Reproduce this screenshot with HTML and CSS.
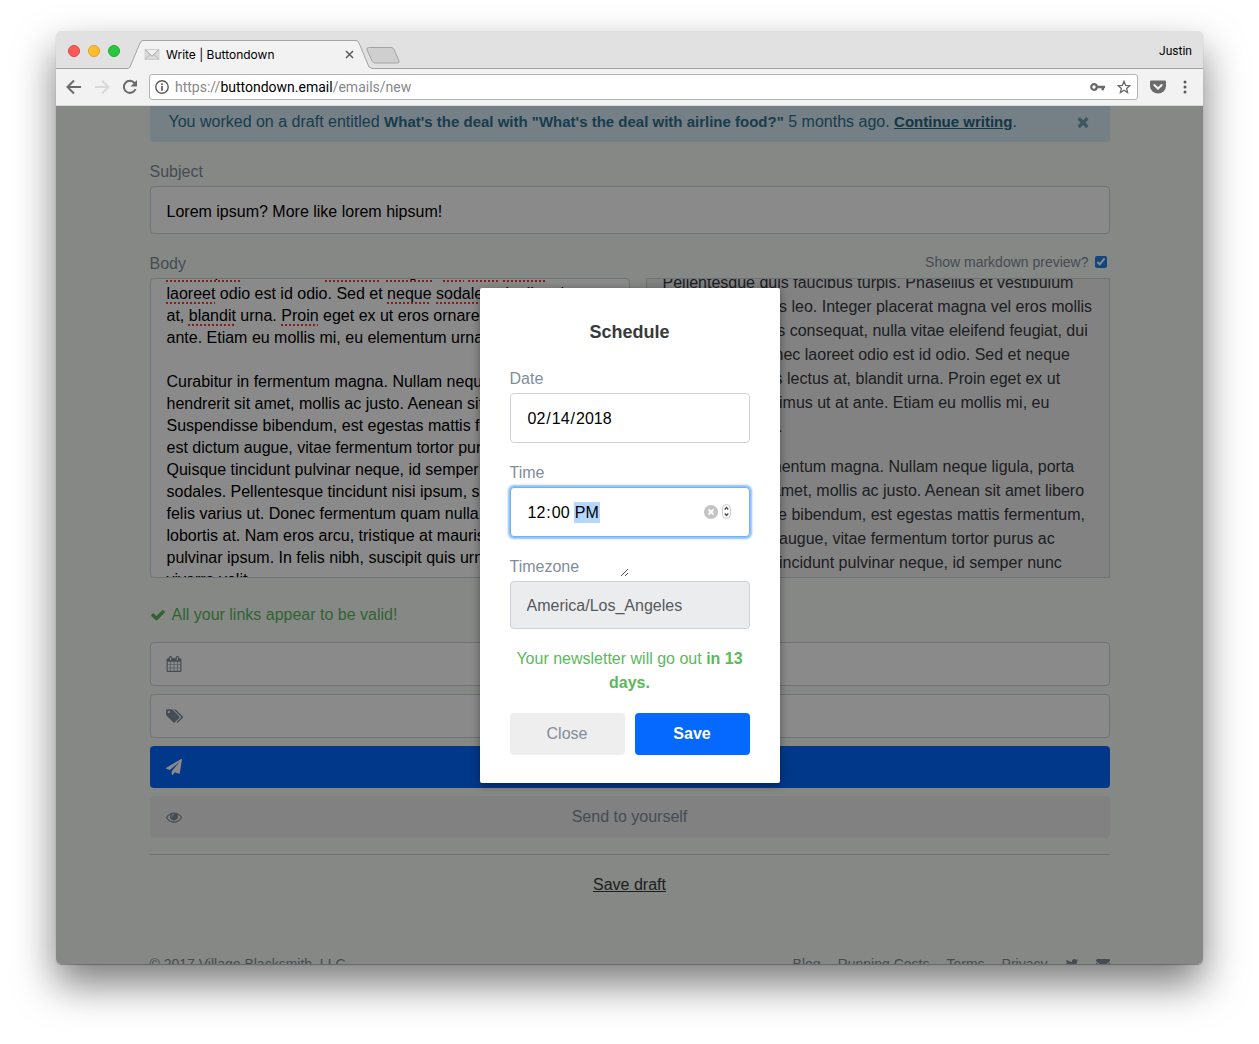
FILE: index.html
```
<!doctype html>
<html lang="en">
<head>
	<meta charset="utf-8">
	<meta name="viewport" content="width=device-width, initial-scale=1">
	<title>Write | Buttondown</title>
	<link rel="stylesheet" href="styles.css">
</head>
<body>

<div class="window">

	<header class="titlebar">
		<div class="lights">
			<span class="light red"></span>
			<span class="light yellow"></span>
			<span class="light green"></span>
		</div>
		<div class="tab">
			<svg class="tab-shape" viewBox="0 0 244 29" preserveAspectRatio="none" aria-hidden="true">
				<path d="M0 28.5 L2 27 L12 3 Q13 .5 15 .5 H228 Q230 .5 231 3 L241 27 L244 28.5 V29 H0z" fill="#f2f2f2"/>
				<path d="M0 28.5 L2 27 L12 3 Q13 .5 15 .5 H228 Q230 .5 231 3 L241 27 L244 28.5" fill="none" stroke="#a3a3a3"/>
			</svg>
			<svg class="favicon" viewBox="0 0 16 12" aria-hidden="true">
				<rect x=".5" y=".5" width="15" height="11" fill="#dcdcdc" stroke="#cacaca"/>
				<path d="M1 11 L6 5.500 M15 11 L10 5.500" stroke="#b0b0b0" fill="none"/>
				<path d="M1 1 L8 8 L15 1" stroke="#9a9a9a" fill="#f0f0f0"/>
			</svg>
			<span class="tab-title">Write | Buttondown</span>
			<button class="plain" type="button" aria-label="Close tab">
				<svg width="9" height="9" viewBox="0 0 9 9"><path d="M1 1l7 7M8 1L1 8" stroke="#5a5a5a" stroke-width="1.500"/></svg>
			</button>
		</div>
		<button class="plain new-tab" type="button" aria-label="New tab">
			<svg width="34" height="17" viewBox="0 0 34 17"><path d="M2.500 .5 H25 Q27 .5 28 2.500 L33 14 Q33.500 16 31.500 16 H9 Q7 16 6 14 L1 3 Q.5 .5 2.500 .5z" fill="#cfcfcf" stroke="#a3a3a3"/></svg>
		</button>
		<span class="profile">Justin</span>
	</header>

	<nav class="toolbar">
		<button class="plain" type="button" aria-label="Back">
			<svg width="16" height="16" viewBox="0 0 16 16"><path d="M15 8H2M8 1.500L1.500 8 8 14.500" fill="none" stroke="#6a6a6a" stroke-width="2"/></svg>
		</button>
		<button class="plain" type="button" aria-label="Forward">
			<svg width="16" height="16" viewBox="0 0 16 16"><path d="M1 8h13M8 1.500L14.500 8 8 14.500" fill="none" stroke="#d8d8d8" stroke-width="2"/></svg>
		</button>
		<button class="plain" type="button" aria-label="Reload">
			<svg width="16" height="16" viewBox="0 0 16 16"><path d="M13.500 10 A6 6 0 1 1 12.500 4" fill="none" stroke="#6a6a6a" stroke-width="2"/><path d="M15 1v6.500H8.500z" fill="#6a6a6a"/></svg>
		</button>
		<div class="address">
			<svg width="14" height="14" viewBox="0 0 14 14" aria-hidden="true"><circle cx="7" cy="7" r="6.200" fill="none" stroke="#5a5a5a" stroke-width="1.400"/><path d="M7 3.200v1.700M7 6v4.800" stroke="#5a5a5a" stroke-width="1.700"/></svg>
			<span class="url">https://<b>buttondown.email</b>/emails/new</span>
			<svg width="15" height="8" viewBox="0 0 15 8" aria-hidden="true"><circle cx="4" cy="4" r="2.800" fill="none" stroke="#6a6a6a" stroke-width="2.200"/><path d="M7 2.800h8v2.400h-1v2h-2.500v-2H7z" fill="#6a6a6a"/></svg>
			<svg width="14" height="14" viewBox="0 0 14 14" aria-hidden="true"><path d="M7 1.300l1.600 4 4.200.300-3.200 2.800 1 4.200L7 10.300l-3.600 2.300 1-4.200L1.200 5.600l4.200-.3z" fill="none" stroke="#6a6a6a" stroke-width="1.300"/></svg>
		</div>
		<svg width="16" height="14" viewBox="0 0 16 14" aria-hidden="true"><path d="M0 1.500Q0 .5 1 .5h14q1 0 1 1V6a8 7.500 0 0 1-16 0z" fill="#6a6a6a"/><path d="M4.300 5L8 8.500l3.700-3.500" fill="none" stroke="#f2f2f2" stroke-width="2" stroke-linecap="round"/></svg>
		<button class="plain menu" type="button" aria-label="Menu">
			<svg width="4" height="14" viewBox="0 0 4 14"><circle cx="2" cy="2" r="1.500" fill="#5a5a5a"/><circle cx="2" cy="7" r="1.500" fill="#5a5a5a"/><circle cx="2" cy="12" r="1.500" fill="#5a5a5a"/></svg>
		</button>
	</nav>

	<div class="viewport">
		<main class="container">

			<div class="alert">
				<span>You worked on a draft entitled <b>What's the deal with "What's the deal with airline food?"</b> 5 months ago. <a href="#">Continue writing</a>.</span>
				<button class="plain dismiss" type="button" aria-label="Dismiss">
					<svg width="16" height="16" viewBox="0 0 1792 1792"><path fill="currentColor" d="M1490 1322q0 40-28 68l-136 136q-28 28-68 28t-68-28l-294-294-294 294q-28 28-68 28t-68-28l-136-136q-28-28-28-68t28-68l294-294-294-294q-28-28-28-68t28-68l136-136q28-28 68-28t68 28l294 294 294-294q28-28 68-28t68 28l136 136q28 28 28 68t-28 68l-294 294 294 294q28 28 28 68z"/></svg>
				</button>
			</div>

			<div class="field">
				<label for="subject">Subject</label>
				<input class="control" id="subject" type="text" value="Lorem ipsum? More like lorem hipsum!">
			</div>

			<div class="field-head">
				<label for="body">Body</label>
				<label class="toggle">Show markdown preview? <input type="checkbox" checked></label>
			</div>
			<div class="panes">
				<div class="editor">
					<textarea id="body" wrap="off" spellcheck="false">consequat, nulla vitae eleifend feugiat, dui nibh mattis est, nec
laoreet odio est id odio. Sed et neque sodales, dapibus lectus
at, blandit urna. Proin eget ex ut eros ornare maximus ut at
ante. Etiam eu mollis mi, eu elementum urna.

Curabitur in fermentum magna. Nullam neque ligula, porta ac
hendrerit sit amet, mollis ac justo. Aenean sit amet libero nisi.
Suspendisse bibendum, est egestas mattis fermentum, nunc
est dictum augue, vitae fermentum tortor purus ac libero.
Quisque tincidunt pulvinar neque, id semper nunc
sodales. Pellentesque tincidunt nisi ipsum, sed rhoncus
felis varius ut. Donec fermentum quam nulla, a aliquet
lobortis at. Nam eros arcu, tristique at mauris non,
pulvinar ipsum. In felis nibh, suscipit quis urna quis,
viverra velit.</textarea>
					<!-- spelling marks, scrolled together with the textarea -->
					<div class="marks" id="marks" aria-hidden="true"><u>consequat</u>, nulla vitae <u>eleifend</u> <u>feugiat</u>, <u>dui</u> <u>nibh</u> <u>mattis</u> est, nec
<u>laoreet</u> odio est id odio. Sed et <u>neque</u> <u>sodales</u>, dapibus lectus
at, <u>blandit</u> urna. <u>Proin</u> eget ex ut eros ornare maximus ut at











</div>
					<svg class="grip" width="9" height="9" viewBox="0 0 9 9" aria-hidden="true"><path d="M1 8l7-7M5 8l3-3" stroke="#555"/></svg>
				</div>
				<div class="preview" id="preview">
					<p>Pellentesque quis faucibus turpis. Phasellus et vestibulum egestas, et luctus leo. Integer placerat magna vel eros mollis neque, in tempus consequat, nulla vitae eleifend feugiat, dui nibh mattis est, nec laoreet odio est id odio. Sed et neque sodales, dapibus lectus at, blandit urna. Proin eget ex ut<br>eros ornare maximus ut at ante. Etiam eu mollis mi, eu elementum urna.</p>
					<p>Curabitur in fermentum magna. Nullam neque ligula, porta ac hendrerit sit amet, mollis ac justo. Aenean sit amet libero nisi. Suspendisse bibendum, est egestas mattis fermentum, nunc est dictum augue, vitae fermentum tortor purus ac libero. Quisque tincidunt pulvinar neque, id semper nunc sodales. Pellentesque tincidunt nisi ipsum.</p>
				</div>
			</div>

			<p class="valid">
				<svg width="16" height="16" viewBox="0 0 1792 1792" aria-hidden="true"><path fill="currentColor" d="M1671 566q0 40-28 68l-724 724-136 136q-28 28-68 28t-68-28l-136-136-362-362q-28-28-28-68t28-68l136-136q28-28 68-28t68 28l294 295 656-657q28-28 68-28t68 28l136 136q28 28 28 68z"/></svg>
				All your links appear to be valid!
			</p>

			<div class="actions">
				<button class="action outline" type="button" aria-label="Schedule">
					<svg width="16" height="16" viewBox="0 0 1792 1792"><path fill="currentColor" d="M192 1664h288v-288h-288v288zm352 0h320v-288h-320v288zm-352-352h288v-320h-288v320zm352 0h320v-320h-320v320zm-352-384h288v-288h-288v288zm736 736h320v-288h-320v288zm-384-736h320v-288h-320v288zm768 736h288v-288h-288v288zm-384-352h320v-320h-320v320zm-352-864v-288q0-13-9.500-22.500t-22.500-9.500h-64q-13 0-22.500 9.500t-9.500 22.500v288q0 13 9.500 22.500t22.500 9.500h64q13 0 22.500-9.500t9.500-22.500zm736 864h288v-320h-288v320zm-384-384h320v-288h-320v288zm384 0h288v-288h-288v288zm32-480v-288q0-13-9.500-22.500t-22.500-9.500h-64q-13 0-22.500 9.500t-9.500 22.500v288q0 13 9.500 22.500t22.500 9.500h64q13 0 22.500-9.500t9.500-22.500zm384-64v1280q0 52-38 90t-90 38h-1408q-52 0-90-38t-38-90v-1280q0-52 38-90t90-38h128v-96q0-66 47-113t113-47h64q66 0 113 47t47 113v96h384v-96q0-66 47-113t113-47h64q66 0 113 47t47 113v96h128q52 0 90 38t38 90z"/></svg>
				</button>
				<button class="action outline" type="button" aria-label="Tags">
					<svg width="17" height="16" viewBox="0 0 1897 1792"><path fill="currentColor" d="M448 448q0-53-37.500-90.500t-90.500-37.500-90.500 37.500-37.500 90.500 37.500 90.500 90.500 37.500 90.500-37.500 37.500-90.500zm1067 576q0 53-37 90l-491 492q-39 37-91 37-53 0-90-37l-715-716q-38-37-64.500-101t-26.500-117v-416q0-52 38-90t90-38h416q53 0 117 26.500t102 64.500l715 714q37 39 37 91zm384 0q0 53-37 90l-491 492q-39 37-91 37-36 0-59-14t-53-45l470-470q37-37 37-90 0-52-37-91l-715-714q-38-38-102-64.500t-117-26.500h224q53 0 117 26.500t102 64.500l715 714q37 39 37 91z"/></svg>
				</button>
				<button class="action primary" type="button" aria-label="Send">
					<svg width="16" height="16" viewBox="0 0 1792 1792"><path fill="currentColor" d="M1764 11q33 24 27 64l-256 1536q-5 29-32 45-14 8-31 8-11 0-24-5l-453-185-242 295q-18 23-49 23-13 0-22-4-19-7-30.500-23.500t-11.500-36.500v-349l864-1059-1069 925-395-162q-37-14-40-55-2-40 32-59l1664-960q15-9 32-9 20 0 36 11z"/></svg>
				</button>
				<button class="action muted" type="button">
					<svg width="16" height="16" viewBox="0 0 1792 1792"><path fill="currentColor" d="M1664 960q-152-236-381-353 61 104 61 225 0 185-131.500 316.500t-316.500 131.500-316.500-131.500-131.500-316.500q0-121 61-225-229 117-381 353 133 205 333.500 326.500t434.500 121.500 434.500-121.500 333.500-326.500zm-720-384q0-20-14-34t-34-14q-125 0-214.500 89.500t-89.500 214.500q0 20 14 34t34 14 34-14 14-34q0-86 61-147t147-61q20 0 34-14t14-34zm848 384q0 34-20 69-140 230-376.500 368.500t-499.500 138.500-499.500-139-376.500-368q-20-35-20-69t20-69q140-229 376.500-368t499.500-139 499.500 139 376.500 368q20 35 20 69z"/></svg>
					<span>Send to yourself</span>
				</button>
			</div>

			<div class="draft"><a href="#">Save draft</a></div>

			<footer class="footer">
				<span class="copyright">© 2017 Village Blacksmith, LLC</span>
				<a href="#">Blog</a>
				<a href="#">Running Costs</a>
				<a href="#">Terms</a>
				<a href="#">Privacy</a>
				<a href="#" aria-label="Twitter"><svg width="14" height="14" viewBox="0 0 1792 1792"><path fill="currentColor" d="M1684 408q-67 98-162 167 1 14 1 42 0 130-38 259.500t-115.500 248.500-184.500 210.500-258 146-323 54.500q-271 0-496-145 35 4 78 4 225 0 401-138-105-2-188-64.500t-114-159.500q33 5 61 5 43 0 85-11-112-23-185.500-111.500t-73.500-205.500v-4q68 38 146 41-66-44-105-115t-39-154q0-88 44-163 121 149 294.500 238.500t371.500 99.500q-8-38-8-74 0-134 94.500-228.500t228.500-94.500q140 0 236 102 109-21 205-78-37 115-142 178 93-10 186-50z"/></svg></a>
				<a href="#" aria-label="Email"><svg width="14" height="14" viewBox="0 0 1792 1792"><path fill="currentColor" d="M1792 710v794q0 66-47 113t-113 47h-1472q-66 0-113-47t-47-113v-794q44 49 101 87 362 246 497 345 57 42 92.500 65.500t94.500 48 110 24.500h2q51 0 110-24.500t94.500-48 92.500-65.500q170-123 498-345 57-39 100-87zm0-294q0 79-49 151t-122 123q-376 261-468 325-10 7-42.500 31t-54 38.500-52 32.500-57.500 27-50 9h-2q-23 0-50-9t-57.500-27-52-32.500-54-38.500-42.500-31q-91-64-262-182.500t-205-142.500q-62-42-117-115.500t-55-136.500q0-78 41.500-130t118.500-52h1472q65 0 112.500 47t47.500 113z"/></svg></a>
			</footer>
		</main>

		<div class="overlay">
			<form class="modal" role="dialog" aria-labelledby="modal-title">
				<h2 id="modal-title">Schedule</h2>
				<div class="field">
					<label for="date">Date</label>
					<input class="control tall" id="date" type="date" value="2018-02-14">
				</div>
				<div class="field">
					<label for="time">Time</label>
					<div class="time-box">
						<input class="control tall active" id="time" type="time" value="12:00">
						<div class="time-tools">
							<button class="plain" type="button" aria-label="Clear">
								<svg width="14" height="14" viewBox="0 0 14 14"><circle cx="7" cy="7" r="7" fill="#c3c3c3"/><path d="M4.500 4.500l5 5M9.500 4.500l-5 5" stroke="#fff" stroke-width="2"/></svg>
							</button>
							<button class="plain" type="button" aria-label="Step">
								<svg width="9" height="15" viewBox="0 0 9 15"><rect x=".5" y=".5" width="8" height="14" rx="4" fill="#fff" stroke="#c8c8c8"/><path d="M2.700 5.500L4.500 3.500l1.800 2M2.700 9.500l1.800 2 1.800-2" fill="none" stroke="#444" stroke-width="1.200"/></svg>
							</button>
						</div>
					</div>
				</div>
				<div class="field">
					<label for="timezone">Timezone</label>
					<input class="control" id="timezone" type="text" value="America/Los_Angeles" disabled>
				</div>
				<p class="summary">Your newsletter will go out <b>in 13 days.</b></p>
				<div class="modal-buttons">
					<button class="btn muted" type="button">Close</button>
					<button class="btn primary" type="submit">Save</button>
				</div>
			</form>
		</div>
	</div>

</div>

<script src="script.js"></script>
</body>
</html>
```
FILE: styles.css
```
*{
	box-sizing: border-box;
}
html,body{
	margin: 0;
	background: #fff;
}
body{
	height: 100vh;
	padding: 31px 56px 80px;
	font-family: "Liberation Sans", Arial, sans-serif;
	font-size: 16px;
	line-height: 24px;
	color: #373a3c;
}
svg{
	display: block;
	flex: none;
}
p{
	margin: 0;
}
button,input,textarea{
	font: inherit;
}
.plain{
	display: block;
	padding: 0;
	border: 0;
	background: none;
	color: inherit;
}

/* browser window */
.window{
	display: flex;
	flex-direction: column;
	height: 100%;
	overflow: hidden;
	border-radius: 5px;
	box-shadow: 0 1px 1px rgba(0,0,0,.3), 0 20px 40px rgba(0,0,0,.52);
}
.titlebar{
	display: flex;
	align-items: center;
	height: 38px;
	padding: 2px 11px 0 12px;
	background: #e1e1e1;
	border-bottom: 1px solid #a3a3a3;
	font-family: Roboto, sans-serif;
	font-size: 12px;
	color: #000;
	flex: none;
}
.lights{
	display: flex;
	gap: 8px;
}
.light{
	width: 12px;
	height: 12px;
	border-radius: 50%;
}
.red{
	background: #fc5b57;
	border: 1px solid #e0443e;
}
.yellow{
	background: #fdbd2e;
	border: 1px solid #dfa023;
}
.green{
	background: #27c83f;
	border: 1px solid #1dad2b;
}
.tab{
	position: relative;
	display: flex;
	align-items: center;
	align-self: flex-end;
	gap: 6px;
	width: 244px;
	height: 29px;
	margin: 0 -6px -1px 8px;
	padding: 0 18px 0 16px;
}
.tab-shape{
	position: absolute;
	inset: 0;
	width: 100%;
	height: 100%;
}
.favicon{
	position: relative;
	width: 16px;
	height: 11px;
}
.tab-title{
	position: relative;
	flex: 1;
	font-family: Inter, sans-serif;
}
.tab .plain{
	position: relative;
}
.new-tab{
	margin-top: 10px;
}
.profile{
	margin-left: auto;
}
.toolbar{
	display: flex;
	align-items: center;
	gap: 12px;
	height: 37px;
	padding: 0 16px 0 10px;
	background: #f2f2f2;
	border-bottom: 1px solid #dadada;
	flex: none;
}
.address{
	display: flex;
	align-items: center;
	gap: 12px;
	flex: 1;
	height: 26px;
	margin-left: -1px;
	padding: 0 6px 0 5px;
	background: #fff;
	border: 1px solid #b4b4b4;
	border-radius: 3px;
	font-family: Roboto, sans-serif;
	font-size: 14px;
}
.url{
	flex: 1;
	margin-left: -6px;
	color: #888;
}
.url b{
	font-weight: 400;
	color: #000;
}
.menu{
	margin-left: 5px;
}

/* page */
.viewport{
	position: relative;
	flex: 1;
	min-height: 0;
	overflow: hidden;
	background: #f8fbf8;
}
.container{
	max-width: 992px;
	margin: 0 auto;
	padding: 0 16px;
}
.alert{
	display: flex;
	justify-content: space-between;
	align-items: center;
	margin-bottom: 18px;
	padding: 4px 19px 8px;
	border-radius: 0 0 4px 4px;
	background: #d9edf7;
	color: #31708f;
}
.alert b,
.alert a{
	font-size: 15px;
}
.alert a{
	font-weight: 700;
	color: #2b6481;
}
.dismiss{
	opacity: .6;
}
.field{
	margin-bottom: 18px;
}
label{
	display: block;
	margin-bottom: 2px;
	color: #818d9a;
}
.control{
	display: block;
	width: 100%;
	height: 48px;
	padding: 3px 16px 0;
	border: 1px solid #ced2dc;
	border-radius: 4px;
	background: #fff;
	color: #000;
}
.control:disabled{
	background: #ebecee;
	color: #55595c;
}
.tall{
	height: 50px;
}
.field-head{
	display: flex;
	justify-content: space-between;
	align-items: flex-start;
}
.toggle{
	display: flex;
	align-items: center;
	gap: 3px;
	margin: 0;
	font-size: 14px;
	line-height: 20px;
}
.toggle input{
	width: 12px;
	height: 12px;
	margin: 3px;
	accent-color: #2a7fe6;
}
.panes{
	display: grid;
	grid-template-columns: 50% 1fr;
	gap: 16px;
	height: 300px;
	margin-bottom: 25px;
}
.editor{
	position: relative;
	display: grid;
	min-height: 0;
}
.editor textarea,
.marks{
	grid-area: 1 / 1;
	min-width: 0;
	height: 300px;
	margin: 0;
	padding: 16px;
	border: 1px solid #ced2dc;
	border-radius: 4px;
	line-height: 22px;
	white-space: pre;
	overflow: hidden;
}
.editor textarea{
	resize: none;
	background: #fff;
	color: #000;
}
.marks{
	border-color: transparent;
	color: transparent;
	pointer-events: none;
}
.marks u{
	text-decoration: underline dotted 2px #f03a3a;
	text-decoration-skip-ink: none;
	text-underline-offset: 3px;
}
.grip{
	position: absolute;
	right: 1px;
	bottom: 1px;
	z-index: 20;
}
.preview{
	min-width: 0;
	padding: 16px;
	border: 1px solid #ced2dc;
	background: #f0f0f3;
	overflow: hidden;
}
.preview p{
	margin-bottom: 16px;
}
.valid{
	display: flex;
	align-items: center;
	gap: 6px;
	margin-bottom: 15px;
	color: #5cb85c;
}
.actions{
	display: grid;
	gap: 8px;
	padding-bottom: 16px;
	border-bottom: 1px solid #ced2dc;
}
.action{
	display: grid;
	grid-template-columns: 18px 1fr 18px;
	align-items: center;
	height: 42px;
	padding: 0 16px;
	border: 0;
	border-radius: 4px;
	color: #818d9a;
}
.outline{
	height: 44px;
	padding: 0 15px;
	background: #fff;
	border: 1px solid #ced2dc;
}
.muted{
	background: #eee;
	color: #818d9a;
}
.primary{
	background: #0568ff;
	color: #fff;
	font-weight: 700;
}
.draft{
	margin: 18px 0 55px;
	text-align: center;
}
.draft a{
	color: #373a3c;
}
.footer{
	display: flex;
	align-items: center;
	gap: 17px;
	font-size: 14px;
	color: #818d9a;
}
.footer a{
	color: #818d9a;
	text-decoration: none;
}
.copyright{
	flex: 1;
}

/* schedule dialog */
.overlay{
	position: absolute;
	inset: 0;
	z-index: 10;
	display: flex;
	align-items: center;
	justify-content: center;
	background: rgba(0,0,0,.46);
}
.modal{
	width: 300px;
	padding: 28px 30px;
	border-radius: 2px;
	background: #fff;
	box-shadow: 0 2px 8px rgba(0,0,0,.4);
}
.modal h2{
	margin: 0 0 19px;
	font-size: 18px;
	line-height: 32px;
	text-align: center;
}
.modal input::-webkit-calendar-picker-indicator{
	display: none;
}
.time-box{
	position: relative;
}
.active{
	border-color: #74b0f8;
	box-shadow: 0 0 2px 2px #8cc0fb;
}
.active::-webkit-datetime-edit-ampm-field{
	padding: 2px 1px;
	background: #b3d7ff;
}
.time-tools{
	position: absolute;
	top: 0;
	bottom: 0;
	right: 19px;
	display: flex;
	align-items: center;
	gap: 4px;
}
.summary{
	margin-bottom: 18px;
	text-align: center;
	color: #5cb85c;
}
.modal-buttons{
	display: grid;
	grid-template-columns: 1fr 1fr;
	gap: 10px;
}
.btn{
	height: 42px;
	border: 0;
	border-radius: 4px;
}
```
FILE: script.js
```
var body = document.getElementById('body');
var marks = document.getElementById('marks');

// keep the spelling marks under their words
body.addEventListener('scroll', function(){
	marks.scrollTop = body.scrollTop;
});

body.scrollTop = 34;
marks.scrollTop = 34;
document.getElementById('preview').scrollTop = 24;
```
